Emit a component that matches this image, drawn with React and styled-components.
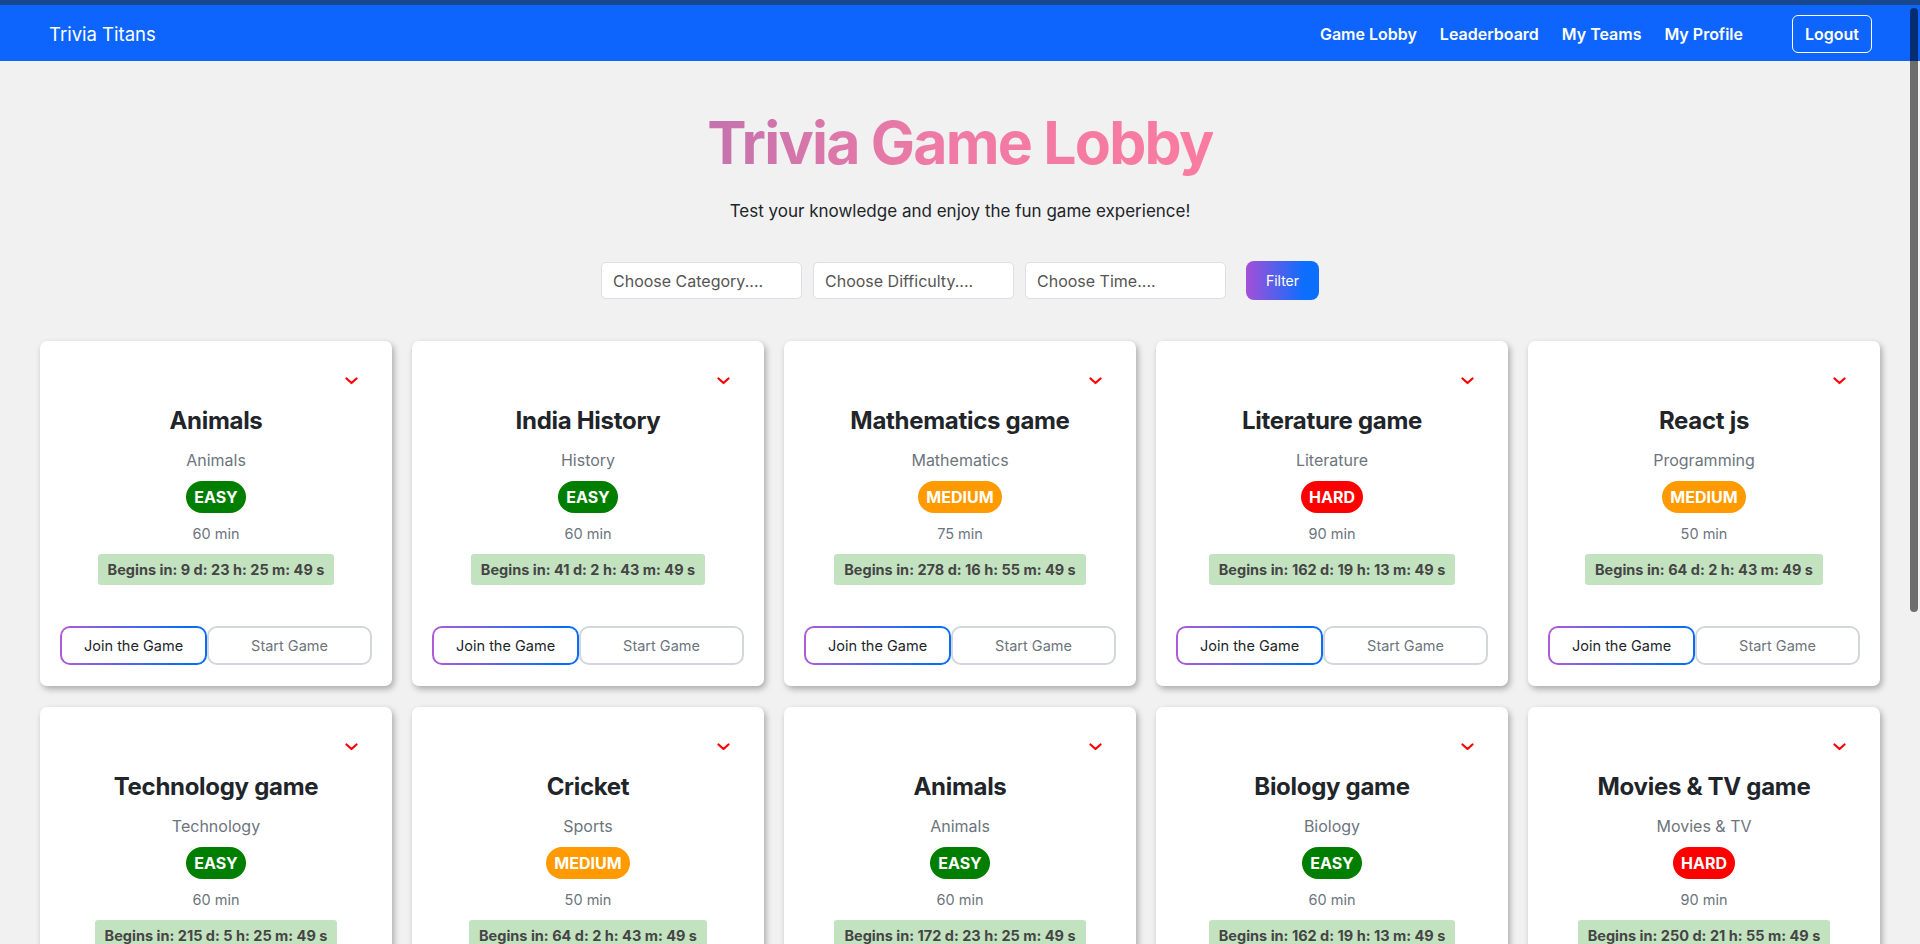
import React from "react";
import styled, { createGlobalStyle } from "styled-components";

const GlobalStyle = createGlobalStyle`
  html {
    scrollbar-width: none;
  }
  html::-webkit-scrollbar {
    display: none;
  }
  body {
    margin: 0;
    background: #f1f1f1;
    font-family: Inter, "Noto Sans", sans-serif;
    color: #212529;
  }
  * {
    box-sizing: border-box;
  }
`;

const games = [
  { title: "Animals", category: "Animals", level: "EASY", time: 60, begins: "9 d: 23 h: 25 m: 49 s" },
  { title: "India History", category: "History", level: "EASY", time: 60, begins: "41 d: 2 h: 43 m: 49 s" },
  { title: "Mathematics game", category: "Mathematics", level: "MEDIUM", time: 75, begins: "278 d: 16 h: 55 m: 49 s" },
  { title: "Literature game", category: "Literature", level: "HARD", time: 90, begins: "162 d: 19 h: 13 m: 49 s" },
  { title: "React js", category: "Programming", level: "MEDIUM", time: 50, begins: "64 d: 2 h: 43 m: 49 s" },
  { title: "Technology game", category: "Technology", level: "EASY", time: 60, begins: "215 d: 5 h: 25 m: 49 s" },
  { title: "Cricket", category: "Sports", level: "MEDIUM", time: 50, begins: "64 d: 2 h: 43 m: 49 s" },
  { title: "Animals", category: "Animals", level: "EASY", time: 60, begins: "172 d: 23 h: 25 m: 49 s" },
  { title: "Biology game", category: "Biology", level: "EASY", time: 60, begins: "162 d: 19 h: 13 m: 49 s" },
  { title: "Movies & TV game", category: "Movies & TV", level: "HARD", time: 90, begins: "250 d: 21 h: 55 m: 49 s" }
];

const levelColors = {
  EASY: "#007e00",
  MEDIUM: "#ff9a00",
  HARD: "#ff0000"
};

const App = () => (
  <>
    <GlobalStyle />
    <TopStrip />
    <Navbar>
      <Brand>Trivia Titans</Brand>
      <NavLinks>
        <NavLink>Game Lobby</NavLink>
        <NavLink>Leaderboard</NavLink>
        <NavLink>My Teams</NavLink>
        <NavLink>My Profile</NavLink>
        <LogoutButton>Logout</LogoutButton>
      </NavLinks>
    </Navbar>

    <Main>
      <Title>Trivia Game Lobby</Title>
      <Subtitle>Test your knowledge and enjoy the fun game experience!</Subtitle>

      <FilterBar>
        <FilterInput placeholder="Choose Category...." />
        <FilterInput placeholder="Choose Difficulty...." />
        <FilterInput placeholder="Choose Time...." />
        <FilterButton>Filter</FilterButton>
      </FilterBar>

      <CardGrid>
        {games.map((g, i) => (
          <Card key={i}>
            <CardHeader>
              <svg width="13" height="8" viewBox="0 0 13 8">
                <polyline
                  points="1.5,1.5 6.5,6 11.5,1.5"
                  fill="none"
                  stroke="#ff0000"
                  strokeWidth="2.2"
                  strokeLinecap="round"
                  strokeLinejoin="round"
                />
              </svg>
            </CardHeader>
            <CardTitle>{g.title}</CardTitle>
            <Category>{g.category}</Category>
            <Badge $color={levelColors[g.level]}>{g.level}</Badge>
            <Duration>{g.time} min</Duration>
            <Countdown>Begins in: {g.begins}</Countdown>
            <ButtonRow>
              <JoinButton>Join the Game</JoinButton>
              <StartButton>Start Game</StartButton>
            </ButtonRow>
          </Card>
        ))}
      </CardGrid>
    </Main>
    <ScrollThumb />
  </>
);

const TopStrip = styled.div`
  height: 5px;
  background: #18498e;
`;

const Navbar = styled.nav`
  height: 56px;
  background: #0d65fd;
  display: flex;
  align-items: center;
  justify-content: space-between;
  padding: 1px 48px 0 49px;
`;

const Brand = styled.span`
  color: #fff;
  font-size: 18.5px;
  font-weight: 400;
`;

const NavLinks = styled.div`
  display: flex;
  align-items: center;
  gap: 23px;
`;

const NavLink = styled.a`
  color: #fff;
  font-size: 16px;
  font-weight: 600;
  cursor: pointer;
`;

const LogoutButton = styled.button`
  margin-left: 26px;
  height: 38px;
  padding: 0 12px;
  background: transparent;
  border: 1px solid #fff;
  border-radius: 6px;
  color: #fff;
  font-family: inherit;
  font-size: 16px;
  font-weight: 600;
`;

const Main = styled.main`
  padding: 0 40px 40px;
`;

const Title = styled.h1`
  margin: 46px auto 0;
  width: fit-content;
  text-align: center;
  font-size: 59px;
  line-height: 72px;
  font-weight: 700;
  letter-spacing: -1.8px;
  background: linear-gradient(90deg, #c373ae 0%, #ef7aa5 45%, #fa7ba0 100%);
  -webkit-background-clip: text;
  background-clip: text;
  color: transparent;
`;

const Subtitle = styled.p`
  margin: 22px 0 0;
  text-align: center;
  font-size: 17px;
  color: #212529;
`;

const FilterBar = styled.div`
  margin-top: 40px;
  display: flex;
  justify-content: center;
  align-items: center;
  gap: 11px;
`;

const FilterInput = styled.input`
  width: 201px;
  height: 37px;
  padding: 0 11px;
  border: 1px solid #dcdfe3;
  border-radius: 5px;
  background: #fff;
  font-family: inherit;
  font-size: 16px;
  color: #212529;
  &::placeholder {
    color: #555;
  }
`;

const FilterButton = styled.button`
  margin-left: 9px;
  width: 73px;
  height: 39px;
  border: none;
  border-radius: 8px;
  background: linear-gradient(90deg, #a54fd8, #0c6efd 80%);
  color: #fff;
  font-family: inherit;
  font-size: 14px;
`;

const CardGrid = styled.div`
  margin-top: 41px;
  display: grid;
  grid-template-columns: repeat(5, 1fr);
  gap: 21px 20px;
`;

const Card = styled.div`
  background: #fff;
  border-radius: 7px;
  box-shadow: 2px 3px 6px rgba(0, 0, 0, 0.3);
  padding: 20px 20px 21px 20px;
  display: flex;
  flex-direction: column;
  align-items: center;
`;

const CardHeader = styled.div`
  align-self: stretch;
  height: 40px;
  display: flex;
  justify-content: flex-end;
  align-items: center;
  padding-right: 14px;
`;

const CardTitle = styled.h2`
  margin: 5px 0 0;
  font-size: 24px;
  line-height: 29px;
  font-weight: 700;
  color: #212529;
  letter-spacing: -0.3px;
`;

const Category = styled.div`
  margin-top: 15px;
  font-size: 16px;
  line-height: 20px;
  color: #6c757d;
`;

const Badge = styled.span`
  margin-top: 11px;
  height: 32px;
  padding: 0 8px;
  display: inline-flex;
  align-items: center;
  border-radius: 16px;
  background: ${({ $color }) => $color};
  color: #fff;
  font-size: 16px;
  font-weight: 700;
`;

const Duration = styled.div`
  margin-top: 12px;
  font-size: 14.5px;
  line-height: 18px;
  color: #6c757d;
`;

const Countdown = styled.div`
  margin-top: 11px;
  height: 31px;
  padding: 0 10px;
  display: flex;
  align-items: center;
  border-radius: 3px;
  background: #c3e3c0;
  color: #454545;
  font-size: 14.5px;
  font-weight: 700;
`;

const ButtonRow = styled.div`
  margin-top: 41px;
  align-self: stretch;
  display: flex;
  gap: 0;
`;

const JoinButton = styled.button`
  height: 39px;
  padding: 0 22px;
  border: 2px solid transparent;
  border-radius: 10px;
  background: linear-gradient(#fff, #fff) padding-box,
    linear-gradient(90deg, #b05bd9, #0a6cfd 85%) border-box;
  color: #212529;
  font-family: inherit;
  font-size: 14.5px;
`;

const StartButton = styled.button`
  flex: 1;
  height: 39px;
  border: 2px solid #d3d7dc;
  border-radius: 10px;
  background: #fff;
  color: #6c757d;
  font-family: inherit;
  font-size: 14.5px;
`;

const ScrollThumb = styled.div`
  position: fixed;
  top: 8px;
  right: 2px;
  width: 8px;
  height: 604px;
  border-radius: 4px;
  background: rgba(0, 0, 0, 0.55);
`;

export default App;
